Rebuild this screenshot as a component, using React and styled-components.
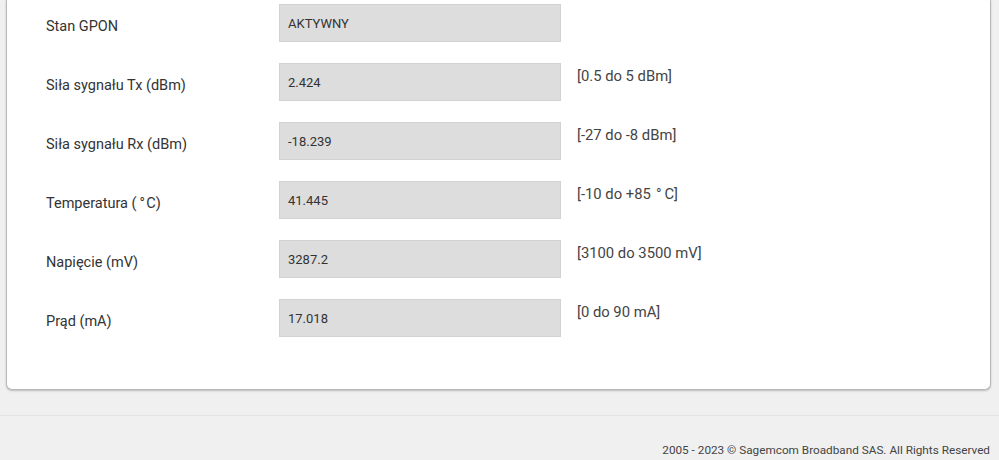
import React from "react";
import styled, { createGlobalStyle } from "styled-components";

const Global = createGlobalStyle`
  html, body { margin: 0; padding: 0; }
  body {
    background: #f0f0f0;
    font-family: Roboto, "Liberation Sans", Arial, sans-serif;
    color: #333;
  }
`;

const Page = styled.div`
  min-height: 460px;
  display: flex;
  flex-direction: column;
`;

const Card = styled.div`
  margin: 0 8px 0 6px;
  background: #fff;
  border: 1px solid #b9b9b9;
  border-top: none;
  border-radius: 0 0 6px 6px;
  box-shadow: 0 1px 2px rgba(0, 0, 0, 0.22);
  padding: 4px 0 52px 39px;
`;

const Form = styled.div`
  display: grid;
  grid-template-columns: 217px 282px auto;
  column-gap: 16px;
  row-gap: 21px;
  align-items: start;
`;

const Label = styled.div`
  font-size: 14.5px;
  line-height: 20px;
  padding-top: 13px;
  color: #333;
`;

const Field = styled.div`
  box-sizing: border-box;
  height: 38px;
  background: #dddddd;
  border: 1px solid #d2d2d2;
  padding: 0 8px;
  display: flex;
  align-items: center;
  font-size: 13px;
  color: #333;
`;

const Range = styled.div`
  font-size: 14.8px;
  line-height: 20px;
  padding-top: 3px;
  color: #444;
`;

const Footer = styled.footer`
  margin-top: 25px;
  border-top: 1px solid #e3e3e3;
  padding: 26px 9px 0 0;
  text-align: right;
  font-size: 11.75px;
  line-height: 16px;
  color: #444;
`;

const rows = [
  { label: "Stan GPON", value: "AKTYWNY", range: "" },
  { label: "Siła sygnału Tx (dBm)", value: "2.424", range: "[0.5 do 5 dBm]" },
  { label: "Siła sygnału Rx (dBm)", value: "-18.239", range: "[-27 do -8 dBm]" },
  { label: "Temperatura (\u2009°\u200AC)", value: "41.445", range: "[-10 do +85 \u200A°\u2009C]" },
  { label: "Napięcie (mV)", value: "3287.2", range: "[3100 do 3500 mV]" },
  { label: "Prąd (mA)", value: "17.018", range: "[0 do 90 mA]" },
];

export default function App() {
  return (
    <Page>
      <Global />
      <Card>
        <Form>
          {rows.map((r) => (
            <React.Fragment key={r.label}>
              <Label>{r.label}</Label>
              <Field>{r.value}</Field>
              <Range>{r.range}</Range>
            </React.Fragment>
          ))}
        </Form>
      </Card>
      <Footer>2005 - 2023 © Sagemcom Broadband SAS. All Rights Reserved</Footer>
    </Page>
  );
}
